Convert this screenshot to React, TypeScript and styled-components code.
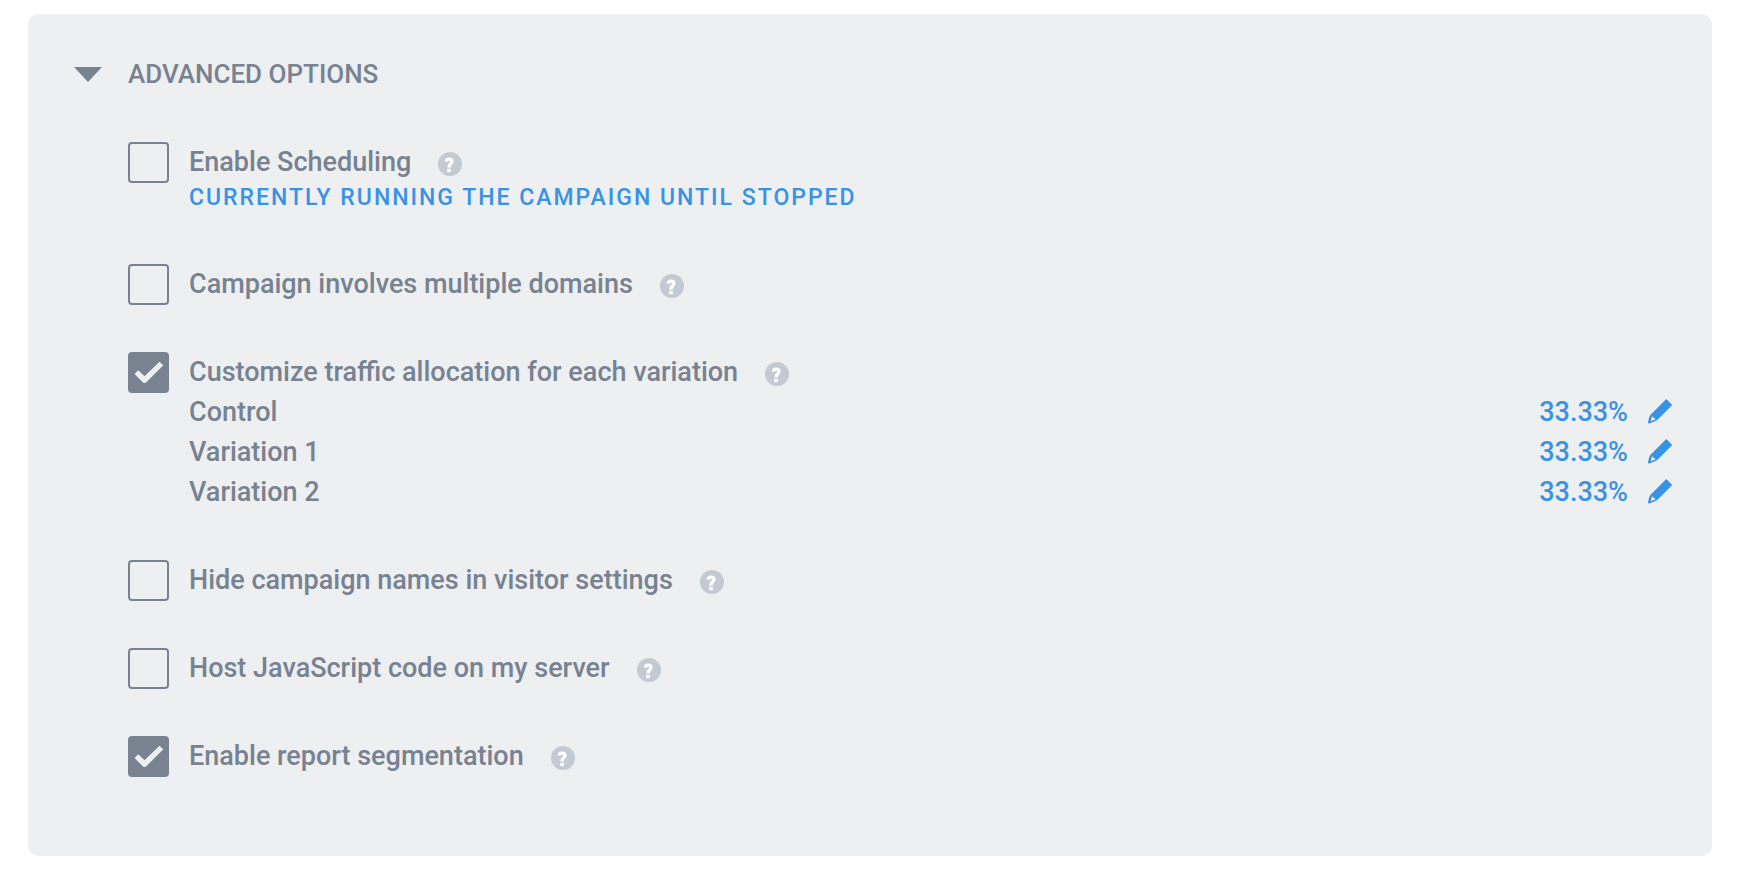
import React, { useState } from "react";
import styled, { createGlobalStyle } from "styled-components";

const slate = "#788291";
const blue = "#3892e5";

const GlobalStyle = createGlobalStyle`
  *, *::before, *::after { box-sizing: border-box; }
  body {
    margin: 0;
    background: #fff;
    color: ${slate};
    font-family: Roboto, "Liberation Sans", sans-serif;
    font-size: 27px;
    font-weight: 500;
    line-height: 40px;
  }
`;

const Page = styled.main`
  padding: 14px 42px 22px 28px;
`;

const Panel = styled.section`
  padding: 40px 40px 80px 46px;
  border-radius: 10px;
  background: #edeff1;
`;

const Heading = styled.h2`
  margin: 0 0 48px;
  font: inherit;
  font-size: 26px;
`;

const Toggle = styled.button`
  display: flex;
  align-items: center;
  gap: 26px;
  padding: 0;
  border: 0;
  background: none;
  color: inherit;
  font: inherit;
  text-transform: uppercase;
  cursor: pointer;
`;

const Caret = styled.svg<{ $open: boolean }>`
  width: 28px;
  height: 15px;
  fill: currentColor;
  transform: ${({ $open }) => ($open ? "none" : "rotate(-90deg)")};
`;

const Options = styled.ul`
  display: flex;
  flex-direction: column;
  gap: 48px;
  margin: 0;
  padding: 0 0 0 54px;
  list-style: none;
`;

const Option = styled.li`
  display: grid;
  grid-template-columns: 41px 1fr;
  column-gap: 20px;
`;

const CheckWrap = styled.span`
  display: grid;
  height: 40px;

  > * {
    grid-area: 1 / 1;
  }
`;

const CheckInput = styled.input`
  appearance: none;
  width: 41px;
  height: 41px;
  margin: 0;
  border: 2px solid ${slate};
  border-radius: 4px;
  cursor: pointer;

  &:checked {
    background: ${slate};
  }
`;

const CheckMark = styled.svg`
  width: 41px;
  height: 41px;
  fill: #edeff1;
  pointer-events: none;
`;

const LabelLine = styled.div`
  display: flex;
  align-items: center;
  gap: 27px;
`;

const Help = styled.button`
  display: flex;
  width: 24px;
  height: 24px;
  margin-top: 4px;
  padding: 0;
  border: 0;
  background: none;
  cursor: help;
`;

const Status = styled.p`
  grid-column: 2;
  margin: 0;
  padding-bottom: 2px;
  color: ${blue};
  font-size: 23px;
  line-height: 32px;
  letter-spacing: 2px;
  text-transform: uppercase;
`;

const Allocation = styled.dl`
  grid-column: 2;
  margin: 0;
`;

const AllocationRow = styled.div`
  display: flex;
  justify-content: space-between;
`;

const Share = styled.dd`
  display: flex;
  align-items: center;
  gap: 20px;
  margin: 0;
  color: ${blue};
`;

const Edit = styled.button`
  display: flex;
  padding: 0 0 2px;
  border: 0;
  background: none;
  color: inherit;
  cursor: pointer;
`;

function HelpIcon() {
  return (
    <svg width="24" height="24" viewBox="0 0 24 24" aria-hidden="true">
      <circle cx="12" cy="12" r="12" fill="#c4cad4" />
      <path d="M8.2 9.6C8.3 7.9 9.5 7.1 11.2 7.1C12.9 7.1 14 8 14 9.5C14 11.6 11 11.6 11 15.4" fill="none" stroke="#fff" strokeWidth="3.2" />
      <rect x="9.2" y="16.8" width="3.6" height="3.4" fill="#fff" />
    </svg>
  );
}

function PencilIcon() {
  return (
    <svg width="24" height="25" viewBox="0 0 24 25" fill="currentColor" aria-hidden="true">
      <path fillRule="evenodd" d="M18.3 0L24.2 6L9.8 20.4C7 22.6 3.5 23.8 0 24.5C.3 21.3 .8 18.2 2.6 15.7ZM4 17.4L2.8 21.8L3.4 22L7.4 20.4L6.8 19.2L5.2 18.9L5 17.4Z" />
    </svg>
  );
}

type OptionRowProps = {
  id: string;
  label: string;
  initial?: boolean;
  children?: React.ReactNode;
};

function OptionRow({ id, label, initial = false, children }: OptionRowProps) {
  const [checked, setChecked] = useState(initial);
  return (
    <Option>
      <CheckWrap>
        <CheckInput id={id} type="checkbox" checked={checked} onChange={(e) => setChecked(e.target.checked)} />
        {checked && (
          <CheckMark viewBox="0 0 41 41" aria-hidden="true">
            <path d="M6.5 22L10.3 18.2L16.5 24.3L31.5 9.7L35.3 13.3L18 30.5Q16.5 31.7 15 30.5Z" />
          </CheckMark>
        )}
      </CheckWrap>
      <LabelLine>
        <label htmlFor={id}>{label}</label>
        <Help type="button" aria-label={`Help: ${label}`}>
          <HelpIcon />
        </Help>
      </LabelLine>
      {children}
    </Option>
  );
}

const variations = ["Control", "Variation 1", "Variation 2"];

export default function App() {
  const [open, setOpen] = useState(true);
  return (
    <Page>
      <GlobalStyle />
      <Panel>
        <Heading>
          <Toggle type="button" aria-expanded={open} onClick={() => setOpen(!open)}>
            <Caret $open={open} viewBox="0 0 28 15" aria-hidden="true">
              <path d="M0 0H28L14 15Z" />
            </Caret>
            Advanced Options
          </Toggle>
        </Heading>
        {open && (
          <Options>
            <OptionRow id="scheduling" label="Enable Scheduling">
              <Status>Currently running the campaign until stopped</Status>
            </OptionRow>
            <OptionRow id="domains" label="Campaign involves multiple domains" />
            <OptionRow id="traffic" label="Customize traffic allocation for each variation" initial>
              <Allocation>
                {variations.map((name) => (
                  <AllocationRow key={name}>
                    <dt>{name}</dt>
                    <Share>
                      33.33%
                      <Edit type="button" aria-label={`Edit ${name}`}>
                        <PencilIcon />
                      </Edit>
                    </Share>
                  </AllocationRow>
                ))}
              </Allocation>
            </OptionRow>
            <OptionRow id="names" label="Hide campaign names in visitor settings" />
            <OptionRow id="host" label="Host JavaScript code on my server" />
            <OptionRow id="segmentation" label="Enable report segmentation" initial />
          </Options>
        )}
      </Panel>
    </Page>
  );
}
